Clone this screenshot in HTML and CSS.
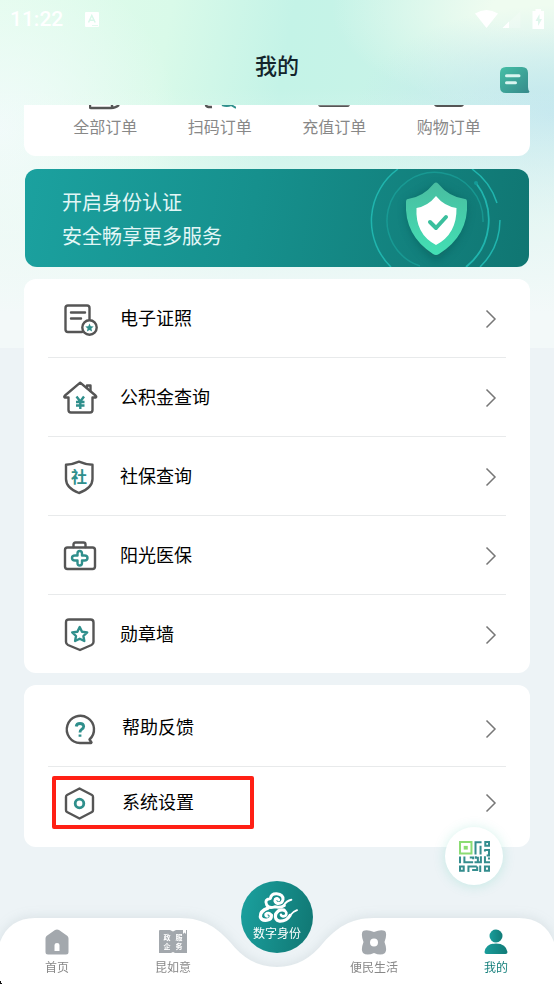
FILE: index.html
```html
<!DOCTYPE html>
<html lang="zh-CN">
<head>
<meta charset="utf-8">
<meta name="viewport" content="width=device-width, initial-scale=1">
<title>我的</title>
<link rel="stylesheet" href="styles.css">
</head>
<body>
<div class="page">
  <header class="header">
    <div class="status">
      <span class="time">11:22</span>
      <svg class="status-app" viewBox="0 0 14 15" aria-hidden="true"><rect width="14" height="15" rx="1" fill="#fff"/><path d="M3.500 10.500 6.800 3.500 10.200 10.500M4.700 8.300H9" fill="none" stroke="#d9f8ea" stroke-width="1.500"/><path d="M7 13.500H13" stroke="#d9f8ea" stroke-width=".7"/></svg>
      <svg class="status-signal" viewBox="0 0 70 20" aria-hidden="true">
        <path d="M1 4.500Q12.500-2.500 24 4.500L12.500 19Z" fill="#fff"/>
        <path d="M28.500 19 46.500 2V19Z" fill="#fff" opacity=".2"/><path d="M28.500 19 35 12.500V19Z" fill="#fff"/>
        <path d="M61.500 0H67V2H70V20H58.500V2H61.500Z" fill="#fff"/><path d="M65.500 5 61.500 12H64V17L68 10H65.500Z" fill="#dff6ec"/>
      </svg>
    </div>
    <h1 class="title">我的</h1>
    <button class="message" aria-label="消息">
      <svg viewBox="0 0 30 26"><defs><linearGradient id="mg" x1="0" y1="0" x2="1" y2="1"><stop stop-color="#45bfa6"/><stop offset="1" stop-color="#36898a"/></linearGradient></defs><path d="M6 0H22Q28 0 28 6V20Q28 23 29.500 24.500Q29.500 26 27 26H6Q0 26 0 20V6Q0 0 6 0Z" fill="url(#mg)"/><path d="M6.500 8.700H19M6.500 15.700H15.500" stroke="#d9f5f0" stroke-width="3" stroke-linecap="round"/></svg>
    </button>
  </header>

  <main class="content">
    <nav class="orders" aria-label="订单">
      <a href="#"><svg viewBox="0 0 32 5"><path d="M1 0V2Q1 3 2 3H22Q27 3 30 0M23 0V3" fill="none" stroke="#555" stroke-width="2.400"/></svg>全部订单</a>
      <a href="#"><svg viewBox="0 0 32 5"><path d="M2 0Q2 2.500 8 2" fill="none" stroke="#555" stroke-width="2.500"/><path d="M18 0Q23 2 27 0L32 3" fill="none" stroke="#2f8f8c" stroke-width="2"/></svg>扫码订单</a>
      <a href="#"><svg viewBox="0 0 34 5"><path d="M0 0H34Q33 2 31 2H3Q1 2 0 0Z" fill="#555"/></svg>充值订单</a>
      <a href="#"><svg viewBox="0 0 32 5"><path d="M1 0H31Q30 2 28 2H4Q2 2 1 0Z" fill="#555"/></svg>购物订单</a>
    </nav>

    <a class="banner" href="#">
      <span class="banner-text">开启身份认证<br>安全畅享更多服务</span>
      <svg class="banner-art" viewBox="0 0 160 98" aria-hidden="true">
        <defs><linearGradient id="sh" x1="0" y1="0" x2="0" y2="1"><stop stop-color="#49bda0"/><stop offset="1" stop-color="#43dfb4"/></linearGradient>
        <filter id="blur" x="-40%" y="-40%" width="180%" height="180%"><feGaussianBlur stdDeviation="5"/></filter></defs>
        <g fill="none" stroke="#20b5ae">
          <path d="M29 0A64 64 0 0 0 22 98M103 0A66 66 0 0 1 128 34M131 51A66 66 0 0 1 111 98" stroke-width="1.500"/>
          <path d="M107 14A60 60 0 0 1 97 98" stroke-width="1.800"/>
          <path d="M51 97A48 48 0 1 1 114 53" opacity=".45" stroke-width="1.500"/>
        </g>
        <circle cx="107" cy="14" r="2" fill="#159b98"/>
        <path d="M67 17 97 34Q99 68 67 92Q36 69 38 34Z" fill="#075654" opacity=".55" filter="url(#blur)"/>
        <path d="M65 14.500Q67 12.500 69 14.500Q80 28 96 30Q98 30 98 33Q100 66 70 85Q67 87 64 85Q35 66 37 33Q37 30 39 30Q54 28 65 14.500Z" fill="url(#sh)"/>
        <path d="M67 27Q75 37 87.500 39Q88 65 67 76Q46 65 47.500 39Q59 37 67 27Z" fill="#fff"/>
        <path d="M61 53 67 59 77 48" fill="none" stroke="#3abf9d" stroke-width="4" stroke-linecap="round" stroke-linejoin="round"/>
      </svg>
    </a>

    <ul class="list">
      <li><a href="#"><svg class="icon" viewBox="0 0 36 36"><g class="line"><path d="M20 31H6Q3.500 31 3.500 28.500V7Q3.500 4.500 6 4.500H25Q27.500 4.500 27.500 7V18"/><path d="M9 11.500H23M9 17.500H19"/><circle cx="27.500" cy="26.500" r="7.200"/></g><path class="solid" d="M27.500 22.500 28.700 25.300 31.700 25.500 29.400 27.500 30.100 30.500 27.500 28.900 24.900 30.500 25.600 27.500 23.300 25.500 26.300 25.300Z"/></svg><span class="label">电子证照</span><svg class="chevron" viewBox="0 0 12 20"><path d="M1.500 1.500 10 10 1.500 18.500"/></svg></a></li>
      <li><a href="#"><svg class="icon" viewBox="0 0 36 36"><g class="line"><path d="M6.500 17.500H3Q1.500 17 3 15.500L18.200 2.700 33.500 15.500Q35 17 33.500 17.500H30.500V30Q30.500 32.500 28 32.500H9Q6.500 32.500 6.500 30Z"/><path d="M25 8V5.500H28.500V11"/></g><path class="teal" d="M14.500 16.500 18.300 21.500 22 16.500M18.300 21.500V29M14 22H22.500M14 25.500H22.500"/></svg><span class="label">公积金查询</span><svg class="chevron" viewBox="0 0 12 20"><path d="M1.500 1.500 10 10 1.500 18.500"/></svg></a></li>
      <li><a href="#"><svg class="icon" viewBox="0 0 36 36"><path class="line" d="M17 2.700Q23 5.500 30.500 5.700V20Q30.500 29 17 34Q4 29 4 20V5.700Q11 5.500 17 2.700Z"/><text class="glyph" x="17" y="24" text-anchor="middle">社</text></svg><span class="label">社保查询</span><svg class="chevron" viewBox="0 0 12 20"><path d="M1.500 1.500 10 10 1.500 18.500"/></svg></a></li>
      <li><a href="#"><svg class="icon" viewBox="0 0 36 36"><g class="line"><rect x="3" y="9.500" width="30" height="21.500" rx="2.500"/><path d="M11.500 9V6.500Q11.500 4.500 13.500 4.500H21.500Q23.500 4.500 23.500 6.500V9"/></g><path class="teal" d="M15.500 17.500V15.500Q15.500 13 17.700 13T20 15.500V17.500H22.500Q25.500 17.500 25.500 20T22.500 22.500H20V25Q20 27.500 17.700 27.500T15.500 25V22.500H13Q10 22.500 10 20T13 17.500Z"/></svg><span class="label">阳光医保</span><svg class="chevron" viewBox="0 0 12 20"><path d="M1.500 1.500 10 10 1.500 18.500"/></svg></a></li>
      <li><a href="#"><svg class="icon" viewBox="0 0 36 36"><path class="line" d="M7 2.500H28.500Q31.500 2.500 31.500 5.500V25Q31.500 27 29.500 28L18 33 6 28Q4 27 4 25V5.500Q4 2.500 7 2.500Z"/><path class="teal" d="M17.700 10 20 14.700 25.200 15.400 21.400 19 22.300 24 17.700 21.700 13.100 24 14 19 10.200 15.400 15.400 14.700Z"/></svg><span class="label">勋章墙</span><svg class="chevron" viewBox="0 0 12 20"><path d="M1.500 1.500 10 10 1.500 18.500"/></svg></a></li>
    </ul>

    <ul class="list list-support">
      <li><a href="#"><svg class="icon" viewBox="0 0 36 36"><path class="line" d="M29 32H18A13.600 13.600 0 1 1 27.500 28.500L29.500 31.500"/><path class="teal mark" d="M14.200 15.500Q14.500 12.500 18 12.500T21.700 15.500Q21.700 17.200 19.500 18.400Q18 19.200 18 21.500M18 23.500V25.700"/></svg><span class="label">帮助反馈</span><svg class="chevron" viewBox="0 0 12 20"><path d="M1.500 1.500 10 10 1.500 18.500"/></svg></a></li>
      <li class="marked"><a href="#"><svg class="icon" viewBox="0 0 36 36"><path class="line" d="M17.500 3.500 30 10Q31 10.500 31 12V25Q31 26.500 30 27L17.500 33.500 5 27Q4 26.500 4 25V12Q4 10.500 5 10Z"/><circle class="teal ring" cx="17.500" cy="18.500" r="4.300"/></svg><span class="label">系统设置</span><svg class="chevron" viewBox="0 0 12 20"><path d="M1.500 1.500 10 10 1.500 18.500"/></svg></a></li>
    </ul>
  </main>

  <button class="qr" aria-label="二维码">
    <svg viewBox="0 0 92 92"><g fill="none" stroke-width="6"><path d="M3 3H37V37H3Z" stroke="#8bdc73"/><path d="M14 20H26" stroke="#8bdc73" stroke-width="11"/>
    <g stroke="#348d8e"><path d="M49 40V4H67M64 14V40M78 3H89V14H78ZM75 27H89V43H82M77 31V26M3 46V66M16 46V63H28M32 49H42V54M28 63H42M50 45V50H56V63H46M65 45V66M53 63H66M77 45V63H92M86 52H92M3 76H14V88H3ZM28 92V76H53M39 86H54V76M63 73V92M77 76H89V88H77Z"/></g></g></svg>
  </button>

  <nav class="tabbar" aria-label="主导航">
    <svg class="tabbar-shape" viewBox="0 0 554 66" preserveAspectRatio="none" aria-hidden="true"><path d="M0 66V24C6 8 18 0 35 0H180C205 0 218 11 230 24C243 40 257 49 277 49C297 49 311 40 324 24C336 11 349 0 374 0H519C536 0 548 8 554 24V66Z" fill="#fff"/><path d="M0 63H1V65H2V66H0Z" fill="#111"/></svg>
    <div class="tabs tabs-left">
      <a href="#"><svg viewBox="0 0 28 26"><path d="M12 1Q14 0 16 1L24.500 7Q25.500 8 25.500 9.500V23Q25.500 25.500 23 25.500H5Q2.500 25.500 2.500 23V9.500Q2.500 8 3.500 7ZM11.500 22H16.500V16Q16.500 14 14 14T11.500 16Z" fill="#a3a8ad" fill-rule="evenodd"/></svg>首页</a>
      <a href="#"><svg viewBox="0 0 28 26"><path d="M0 2Q0 1 1 1H11L14 2.500 17 1H28V24H16L14 23 12 24H0Z" fill="#a3a8ad"/><path d="M24 1H27V5L25.500 3.500 24 5Z" fill="#fff"/><g class="mini"><text x="4.500" y="11">政</text><text x="16.500" y="11">服</text><text x="4.500" y="20">企</text><text x="16.500" y="20">务</text></g></svg>昆如意</a>
    </div>
    <a class="identity" href="#">
      <svg viewBox="-5 0 120 92"><g fill="none" stroke="#fff" stroke-width="8" stroke-linecap="round" stroke-linejoin="round"><path stroke-width="9" d="M77 40Q65 48 48 44Q30 50 24 38Q16 22 35 19Q38 4 54 5Q74 7 73 22Q70 35 57 34Q46 30 50 21Q56 16 60 23"/><path d="M98 23Q84 26 75 40" stroke-width="6"/><path stroke-width="10" d="M28 48Q4 56 5 74Q8 86 25 84Q39 82 38 69"/><path d="M38 69Q30 58 21 66Q20 72 26 73"/><path stroke-width="10" d="M94 70Q83 88 63 87Q47 84 51 66Q60 50 76 54"/><path d="M76 54Q88 62 80 71Q69 75 67 68"/><path d="M115 54Q103 58 94 70" stroke-width="6"/></g></svg>
      数字身份
    </a>
    <div class="tabs tabs-right">
      <a href="#"><svg viewBox="0 0 28 26"><path d="M3 2Q7 0 14 3Q21 0 25 2Q27.500 5 24.500 13Q27.500 21 25 24Q21 27 14 24Q7 27 3 24Q.5 21 3.500 13Q.5 5 3 2ZM14 9.500A4 4 0 1 0 14 17.500A4 4 0 1 0 14 9.500Z" fill="#a3a8ad" fill-rule="evenodd"/></svg>便民生活</a>
      <a class="active" href="#"><svg viewBox="0 0 28 26"><defs><linearGradient id="ug"><stop stop-color="#1a9d9b"/><stop offset="1" stop-color="#117b77"/></linearGradient></defs><g fill="url(#ug)"><circle cx="14" cy="7" r="6.500"/><path d="M2.500 23Q4 14.500 14 14.500T25.500 23Q25.500 25 23.500 25H4.500Q2.500 25 2.500 23Z"/></g></svg>我的</a>
    </div>
  </nav>
</div>
</body>
</html>
```
FILE: styles.css
```css
*, *::after { box-sizing: border-box; }

body {
  margin: 0;
  background: #edf3f6;
  color: #111;
  font-family: "Noto Sans CJK SC", sans-serif;
}

a { color: inherit; text-decoration: none; }
button { padding: 0; border: 0; background: none; cursor: pointer; }
svg { display: block; flex: none; }

.page {
  position: relative;
  min-height: 100vh;
  padding-bottom: 136px;
  background:
    linear-gradient(180deg, rgba(243, 249, 249, 0) 25%, #f3f9f9 90%) top / 100% 348px no-repeat,
    radial-gradient(ellipse 200px 110px at 100% 115px, #c2e7ee 0%, rgba(194, 231, 238, 0) 100%) top / 100% 348px no-repeat,
    radial-gradient(ellipse 200px 100px at 96% 10px, #effcf0 20%, rgba(239, 252, 240, 0) 100%) top / 100% 348px no-repeat,
    radial-gradient(ellipse 180px 180px at 0 130px, #f1fbfa 0%, rgba(241, 251, 250, 0) 100%) top / 100% 348px no-repeat,
    linear-gradient(100deg, #e2fcec 0%, #d9fae9 28%, #c4f3e7 48%, #c8f3e8 70%, #d6f3ed 100%) top / 100% 348px no-repeat;
}

.header { position: relative; height: 105px; }

.status {
  display: flex;
  align-items: center;
  height: 38px;
  padding: 0 10px;
  color: #fff;
}
.time { font: 500 21px/38px Roboto, sans-serif; }
.status-app { width: 14px; height: 15px; margin-left: 22px; }
.status-signal { width: 70px; height: 20px; margin-left: auto; }

.title {
  margin: 0;
  font-size: 22px;
  font-weight: 500;
  line-height: 52px;
  text-align: center;
  color: #13242b;
}

.message { position: absolute; right: 24px; bottom: 12px; }
.message svg { width: 30px; height: 26px; }

.content {
  display: flex;
  flex-direction: column;
  gap: 12px;
  padding: 0 24px;
}

.orders {
  display: grid;
  grid-template-columns: repeat(4, 1fr);
  height: 51px;
  padding: 0 24px;
  border-radius: 0 0 12px 12px;
  background: #fff;
}
.orders a {
  display: flex;
  flex-direction: column;
  align-items: center;
  gap: 4px;
  font-size: 16px;
  font-weight: 400;
  line-height: 24px;
  color: #888;
}
.orders svg { width: 32px; height: 5px; }

.banner {
  display: flex;
  align-items: center;
  justify-content: space-between;
  height: 98px;
  margin: 1px 1px 0;
  padding-left: 37px;
  overflow: hidden;
  border-radius: 12px;
  background: linear-gradient(100deg, #1ba19f, #16908d 45%, #107672);
  color: #e2f6f6;
}
.banner-text { padding-top: 2px; font-size: 20px; font-weight: 400; line-height: 34px; }
.banner-art { width: 160px; height: 98px; }

.list {
  margin: 0;
  padding: 0 24px;
  list-style: none;
  border-radius: 12px;
  background: #fff;
}
.list li + li { border-top: 1px solid #e8eaeb; }
.list a {
  display: flex;
  align-items: center;
  gap: 22px;
  height: 78px;
  padding: 2px 9px 0 14px;
}
.label {
  flex: 1;
  font-size: 18px;
  font-weight: 400;
  line-height: 26px;
  color: #000;
  margin-bottom: 5px;
}
.icon { width: 36px; height: 36px; }
.chevron { width: 12px; height: 20px; }
.chevron path { fill: none; stroke: #777; stroke-width: 1.5; }

.list-support { padding-top: 6px; padding-bottom: 8px; }
.list-support a { height: 75px; gap: 24px; padding-top: 0; }
.list-support .marked a { height: 72px; }
.marked { position: relative; }
.marked::after {
  content: "";
  position: absolute;
  top: 9px;
  left: 4px;
  width: 202px;
  height: 53px;
  border: 4px solid #ff2015;
  border-radius: 2px;
  pointer-events: none;
}

.line { fill: none; stroke: #555; stroke-width: 2.4; stroke-linejoin: round; stroke-linecap: round; }
.teal { fill: none; stroke: #2f8f8c; stroke-width: 2.4; stroke-linejoin: round; }
.ring, .mark { stroke-width: 2.8; }
.solid { fill: #2f8f8c; }
.glyph { font-size: 16px; font-weight: 700; fill: #2f8f8c; }

.qr {
  position: fixed;
  right: 51px;
  bottom: 99px;
  display: grid;
  place-items: center;
  width: 58px;
  height: 58px;
  border-radius: 50%;
  background: #fff;
  box-shadow: 0 1px 12px rgba(70, 205, 175, .25);
}
.qr svg { width: 31px; height: 31px; }

.tabbar {
  position: fixed;
  right: 0;
  bottom: 0;
  left: 0;
  display: grid;
  grid-template-columns: 1fr 94px 1fr;
  height: 66px;
}
.tabbar-shape {
  position: absolute;
  inset: 0;
  width: 100%;
  height: 100%;
  filter: drop-shadow(0 -1px 6px rgba(90, 120, 130, .14));
}
.tabs {
  position: relative;
  display: flex;
  justify-content: space-between;
  padding-top: 11px;
}
.tabs-left { padding-right: 39px; padding-left: 45px; }
.tabs-right { padding-right: 46px; padding-left: 26px; }
.tabs a {
  display: flex;
  flex-direction: column;
  align-items: center;
  gap: 3px;
  font-size: 12px;
  font-weight: 400;
  line-height: 18px;
  color: #888;
}
.tabs svg { width: 28px; height: 26px; margin: 0 -2px; }
.tabs .active { color: #147f7b; }
.mini { font-size: 7px; font-weight: 700; fill: #fff; }

.identity {
  position: relative;
  display: flex;
  flex-direction: column;
  align-items: center;
  gap: 1px;
  justify-self: center;
  width: 72px;
  height: 72px;
  margin-top: -37px;
  padding-top: 11px;
  border-radius: 50%;
  background: linear-gradient(100deg, #1ba19f, #107672);
  color: #fff;
  font-size: 12px;
  font-weight: 400;
  line-height: 18px;
}
.identity svg { width: 40px; height: 31px; overflow: visible; }
```
